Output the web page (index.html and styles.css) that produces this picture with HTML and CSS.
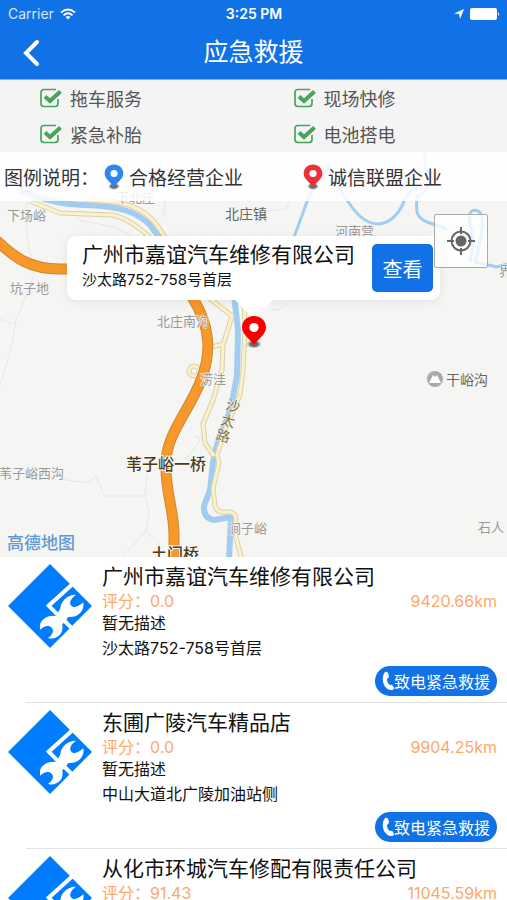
FILE: index.html
```html
<!DOCTYPE html>
<html lang="zh-CN">
<head>
    <meta charset="UTF-8">
    <meta name="viewport" content="width=device-width, initial-scale=1.0">
    <title>应急救援</title>
    <link rel="stylesheet" href="styles.css">
</head>
<body>

<!-- shared icons -->
<svg class="defs" width="0" height="0" aria-hidden="true">
    <symbol id="pin" viewBox="0 0 28 36">
        <ellipse cx="14" cy="30" rx="7" ry="4" fill="#000" opacity=".2"/>
        <ellipse cx="14" cy="30" rx="5" ry="3" fill="#000" opacity=".45"/>
        <path d="M14 2C7 2 2 7 2 13.500C2 20 8 23 14 31C20 23 26 20 26 13.500C26 7 21 2 14 2Z" fill="currentColor"/>
        <circle cx="14" cy="13.500" r="4.600" fill="#fff"/>
    </symbol>
    <symbol id="repair" viewBox="0 0 84 84">
        <path d="M42 0L84 42L42 84L0 42Z" fill="#007cff"/>
        <g transform="translate(22 11) scale(.3333)" fill="#fff">
            <path d="M128 27L56 92L82 118" fill="none" stroke="#fff" stroke-width="12"/>
            <path d="M104 138L132 166" fill="none" stroke="#fff" stroke-width="12"/>
            <path d="M138 59C116 58 96 74 92 94C91 102 88 107 78 123C62 119 34 128 30 150Q29 158 31 164C42 151 58 150 65 158C73 166 68 180 54 188C66 194 82 189 91 178C99 168 98 158 97 148C104 142 108 135 115 126C136 128 152 118 159 100Q162 90 160 82C148 94 132 100 124 92C116 84 122 70 138 59Z"/>
        </g>
    </symbol>
    <symbol id="phone" viewBox="0 0 12 20">
        <path d="M3 1Q5 0 6 2L7 5Q7 7 5 8Q5 12 8 14Q10 13 11 15L12 17Q12 19 9 19Q5 19 2 14Q-1 6 3 1Z" fill="#fff"/>
    </symbol>
</svg>

<div class="app">
    <header class="header">
        <div class="status-bar">
            <div class="carrier">
                <span>Carrier</span>
                <svg width="16" height="12" viewBox="0 0 16 12" fill="none" stroke="#fff" stroke-width="1.800">
                    <path d="M1 4.500Q8 -1.500 15 4.500"/>
                    <path d="M3.500 7.300Q8 3.300 12.500 7.300"/>
                    <path d="M8 11.500L5.500 9Q8 7 10.500 9Z" fill="#fff" stroke="none"/>
                </svg>
            </div>
            <span class="time">3:25 PM</span>
            <div class="battery">
                <svg width="10" height="10" viewBox="0 0 10 10"><path d="M10 0L6 10L5 5L0 4.500Z" fill="#fff"/></svg>
                <svg width="30" height="12" viewBox="0 0 30 12" fill="#fff"><rect width="27" height="12" rx="2"/><path d="M28 4Q30 6 28 8Z"/></svg>
            </div>
        </div>
        <div class="nav">
            <button class="back" aria-label="返回">
                <svg width="18" height="28" viewBox="0 0 18 28"><path d="M15 3L4 14L15 25" fill="none" stroke="#fff" stroke-width="4" stroke-linecap="round"/></svg>
            </button>
            <h1>应急救援</h1>
        </div>
    </header>

    <section class="services">
        <label><input type="checkbox" checked>拖车服务</label>
        <label><input type="checkbox" checked>现场快修</label>
        <label><input type="checkbox" checked>紧急补胎</label>
        <label><input type="checkbox" checked>电池搭电</label>
    </section>

    <section class="map">
        <svg class="map-canvas" viewBox="0 152 507 405" preserveAspectRatio="xMidYMin slice">
            <g class="path">
                <path d="M27 201V235L34 275L16 320L12 345L0 386"/>
                <path d="M0 319L12 324"/>
                <path d="M78 205V220L115 227L140 240M165 201L164 214L150 225"/>
                <path d="M60 479L80 482L87 482L96 477L102 490L105 496H145L147 475M145 496L149 513L146 531L122 557M146 531L160 545"/>
                <path d="M185 460L197 445L201 438L194 436"/>
                <path d="M270 310L280 309L287 304M253 213L285 209L290 201"/>
            </g>
            <g class="river">
                <path class="wide" d="M20 190Q50 204 85 205C120 206 137 212 150 225L172 255"/>
                <path class="wide" d="M234 295L238 330L237 375L231 408L217 445L213 462L210 490L204 506Q203 518 214 520L231 517L229 560"/>
                <path d="M330 165Q310 190 304 210L293 240M325 165Q340 190 349 203Q363 224 378 224Q393 223 402 206Q407 190 420 185"/>
                <path d="M425 150Q424 165 430 185Q422 196 417 196C416 210 415 217 427 222L447 229M470 262Q475 240 470 225Q467 207 478 211Q488 215 475 262L497 267L507 264"/>
            </g>
            <g class="minor-edge">
                <path d="M30 201L60 213L112 215Q130 218 155 242M85 200L115 202Q142 206 156 224L167 240"/>
                <path d="M244 295L245 330L243 370L240 395L225 430L217 455L219 463L213 488L215 506Q217 513 226 512Q236 511 236 520V538L242 560"/>
                <path d="M204 294L232 316L223 345L222 370L213 400L203 424L205 443L214 456M223 344L208 348"/>
                <circle cx="194" cy="371" r="5"/>
            </g>
            <g class="minor">
                <path d="M30 201L60 213L112 215Q130 218 155 242M85 200L115 202Q142 206 156 224L167 240"/>
                <path d="M244 295L245 330L243 370L240 395L225 430L217 455L219 463L213 488L215 506Q217 513 226 512Q236 511 236 520V538L242 560"/>
                <path d="M204 294L232 316L223 345L222 370L213 400L203 424L205 443L214 456M223 344L208 348"/>
                <circle cx="194" cy="371" r="5"/>
            </g>
            <path class="highway-edge" d="M-4 240C15 258 30 269 60 269C110 269 165 265 192 297C212 328 211 355 201 380C190 410 165 435 166 465C165 490 174 510 174 535V560"/>
            <path class="highway" d="M-4 240C15 258 30 269 60 269C110 269 165 265 192 297C212 328 211 355 201 380C190 410 165 435 166 465C165 490 174 510 174 535V560"/>
            <g class="place">
                <text x="7" y="220">下场峪</text>
                <text x="116" y="202">下北庄</text>
                <text x="10" y="293">坑子地</text>
                <text x="335" y="236">河南营</text>
                <text x="499" y="276">界</text>
                <text x="157" y="326">北庄南沟</text>
                <text x="200" y="384">涝洼</text>
                <text x="-1" y="478">苇子峪西沟</text>
                <text x="228" y="533">涧子峪</text>
                <text x="478" y="532">石人</text>
            </g>
            <g class="place dark">
                <text x="225" y="219">北庄镇</text>
                <text x="446" y="385">干峪沟</text>
            </g>
            <g class="place road">
                <text x="226" y="411" transform="rotate(15 233 406)">沙</text>
                <text x="221" y="426" transform="rotate(15 228 421)">太</text>
                <text x="216" y="441" transform="rotate(15 223 436)">路</text>
            </g>
            <g class="place bridge">
                <text x="126" y="470">苇子峪一桥</text>
                <text x="151" y="560">土门桥</text>
            </g>
            <circle cx="435" cy="379" r="8" fill="#a4abb1"/>
            <path d="M429 383L433 375L435 377L437 375L441 383Z" fill="#fff"/>
            <text class="amap" x="7" y="549">高德地图</text>
        </svg>

        <div class="legend">
            <span class="legend-title">图例说明：</span>
            <span class="legend-item"><svg class="pin-blue"><use href="#pin"/></svg>合格经营企业</span>
            <span class="legend-item"><svg class="pin-red"><use href="#pin"/></svg>诚信联盟企业</span>
        </div>

        <div class="callout">
            <div class="callout-text">
                <h2>广州市嘉谊汽车维修有限公司</h2>
                <p>沙太路752-758号首层</p>
            </div>
            <button class="view-btn">查看</button>
        </div>
        <svg class="marker"><use href="#pin"/></svg>

        <button class="locate" aria-label="定位">
            <svg width="28" height="28" viewBox="0 0 28 28" fill="none" stroke="#666" stroke-width="2">
                <circle cx="14" cy="14" r="9.500"/>
                <circle cx="14" cy="14" r="5.500" fill="#666" stroke="none"/>
                <path d="M14 0V7M14 21V28M0 14H7M21 14H28"/>
            </svg>
        </button>
    </section>

    <main class="shops">
        <article class="shop">
            <svg class="shop-logo"><use href="#repair"/></svg>
            <div class="shop-info">
                <h2>广州市嘉谊汽车维修有限公司</h2>
                <div class="score"><span>评分：0.0</span><span>9420.66km</span></div>
                <p class="desc">暂无描述</p>
                <p class="address">沙太路752-758号首层</p>
                <button class="call-btn"><svg><use href="#phone"/></svg>致电紧急救援</button>
            </div>
        </article>
        <article class="shop">
            <svg class="shop-logo"><use href="#repair"/></svg>
            <div class="shop-info">
                <h2>东圃广陵汽车精品店</h2>
                <div class="score"><span>评分：0.0</span><span>9904.25km</span></div>
                <p class="desc">暂无描述</p>
                <p class="address">中山大道北广陵加油站侧</p>
                <button class="call-btn"><svg><use href="#phone"/></svg>致电紧急救援</button>
            </div>
        </article>
        <article class="shop">
            <svg class="shop-logo"><use href="#repair"/></svg>
            <div class="shop-info">
                <h2>从化市环城汽车修配有限责任公司</h2>
                <div class="score"><span>评分：91.43</span><span>11045.59km</span></div>
            </div>
        </article>
    </main>
</div>

</body>
</html>
```
FILE: styles.css
```css
* { box-sizing: border-box; }
body {
    margin: 0;
    font-family: Inter, "Noto Sans CJK SC", sans-serif;
    color: #111;
    background-color: #fff;
}
h1, h2, p { margin: 0; font-weight: 400; }
button {
    font-family: inherit;
    border: none;
    padding: 0;
    cursor: pointer;
}
svg { display: block; flex: none; }
.defs { position: absolute; }
.app {
    display: flex;
    flex-direction: column;
    height: 100vh;
    overflow: hidden;
}

/* Header */
.header {
    flex: none;
    background-color: #1171e6;
    border-bottom: 1px solid #7fb2f3;
    color: #fff;
}
.status-bar {
    display: grid;
    grid-template-columns: 1fr auto 1fr;
    align-items: center;
    height: 27px;
    padding: 0 7px 0 8px;
    font-size: 14px;
}
.carrier, .battery {
    display: flex;
    align-items: center;
    gap: 6px;
}
.battery { justify-content: flex-end; }
.carrier { color: #d5e6fb; }
.time { font-weight: 600; }
.nav {
    display: grid;
    grid-template-columns: 1fr auto 1fr;
    align-items: center;
    height: 52px;
    padding: 0 22px;
}
.nav h1 { font-size: 25px; line-height: 48px; padding-bottom: 2px; }
.back { background: none; justify-self: start; }

/* Services */
.services {
    flex: none;
    display: grid;
    grid-template-columns: 1fr 1fr;
    background-color: #f4f4f4;
    color: #555;
    font-size: 18px;
}
.services label {
    display: flex;
    align-items: center;
    gap: 8px;
    height: 36px;
    padding-left: 40px;
}
.services input {
    appearance: none;
    width: 22px;
    height: 20px;
    margin: 0;
    background: url("data:image/svg+xml,%3Csvg xmlns='http://www.w3.org/2000/svg' viewBox='0 0 22 20' fill='none' stroke='%2346a558'%3E%3Cpath d='M16 1.500H4Q1 1.500 1 4.500V15.500Q1 18.500 4 18.500H15Q18 18.500 18 15.500V11' stroke-width='1.700'/%3E%3Cpath d='M5 8.500L10 13L20.500 3.500' stroke-width='4'/%3E%3C/svg%3E") no-repeat;
}

/* Map */
.map {
    flex: none;
    position: relative;
    height: 405px;
    overflow: hidden;
    background-color: #f5f5f3;
}
.map-canvas {
    position: absolute;
    top: 0;
    left: 0;
    width: 100%;
    height: 100%;
}
.map-canvas path, .minor circle { stroke-linejoin: round; }
.path, .river, .minor, .minor-edge, .highway, .highway-edge { fill: none; }
.path { stroke: #e6e6e4; stroke-width: 1; }
.river { stroke: #a3cdf0; stroke-width: 3; }
.river .wide { stroke-width: 6; }
.minor-edge { stroke: #d9d0ac; stroke-width: 5; }
.minor { stroke: #fcf2c8; stroke-width: 3; }
.highway-edge { stroke: #cf8631; stroke-width: 11; }
.highway { stroke: #f8982a; stroke-width: 9; }
.place {
    font-size: 13px;
    fill: #999;
    stroke: #f8f8f6;
    stroke-width: 1;
    paint-order: stroke;
}
.dark { font-size: 14px; fill: #666; }
.road { font-size: 14px; fill: #7d7048; }
.bridge { font-size: 16px; font-weight: 500; fill: #4a3c1c; stroke-width: 2; }
.amap { font-size: 17px; font-weight: 500; fill: #6299d0; }

.legend {
    position: relative;
    display: flex;
    align-items: center;
    height: 49px;
    padding-left: 4px;
    background-color: rgba(255, 255, 255, 0.85);
    color: #333;
    font-size: 19px;
}
.legend-title { width: 99px; }
.legend-item {
    display: flex;
    align-items: center;
    gap: 4px;
    width: 199px;
}
.legend svg { width: 22px; height: 28px; }
.pin-blue { color: #2f86ee; }
.pin-red { color: #f03038; }

.callout {
    position: absolute;
    top: 84px;
    left: 67px;
    right: 67px;
    display: flex;
    align-items: center;
    justify-content: space-between;
    height: 64px;
    padding: 0 7px 0 15px;
    background-color: #fff;
    border-radius: 9px;
    box-shadow: 0 2px 10px rgba(0, 0, 0, 0.08);
}
.callout::after {
    content: "";
    position: absolute;
    top: 100%;
    left: 50%;
    transform: translateX(-50%);
    border: 19px solid transparent;
    border-top-color: #fff;
    border-bottom: none;
}
.callout-text { padding-bottom: 4px; }
.callout h2 { font-size: 21px; line-height: 28px; }
.callout p { font-size: 15px; line-height: 22px; }
.view-btn {
    width: 61px;
    height: 48px;
    border-radius: 5px;
    background-color: #1171e6;
    color: #fff;
    font-size: 20px;
}
.marker {
    position: absolute;
    top: 162px;
    left: 50%;
    transform: translateX(-50%);
    width: 28px;
    height: 36px;
    color: #f80000;
}
.locate {
    position: absolute;
    top: 62px;
    right: 19px;
    display: flex;
    align-items: center;
    justify-content: center;
    width: 54px;
    height: 54px;
    background-color: rgba(255, 255, 255, 0.75);
    border: 1px solid #aaa;
    border-radius: 2px;
}

/* Shop list */
.shops { flex: 1; min-height: 0; overflow: hidden; }
.shop {
    position: relative;
    display: flex;
    gap: 10px;
    padding: 7px 10px 7px 8px;
}
.shop:not(:last-child)::after {
    content: "";
    position: absolute;
    left: 26px;
    right: 0;
    bottom: 0;
    height: 1px;
    background-color: #e4e4e4;
}
.shop-logo { width: 84px; height: 84px; }
.shop-info {
    flex: 1;
    display: flex;
    flex-direction: column;
    font-size: 16px;
}
.shop-info h2 { font-size: 21px; line-height: 26px; }
.score {
    display: flex;
    justify-content: space-between;
    line-height: 22px;
    color: #fda868;
}
.desc { line-height: 22px; }
.address { line-height: 28px; }
.call-btn {
    display: flex;
    align-items: center;
    align-self: flex-end;
    height: 30px;
    margin-top: 4px;
    padding: 0 7px;
    border-radius: 15px;
    background-color: #1171e6;
    color: #fff;
    font-size: 16px;
}
.call-btn svg { width: 12px; height: 20px; }
```
